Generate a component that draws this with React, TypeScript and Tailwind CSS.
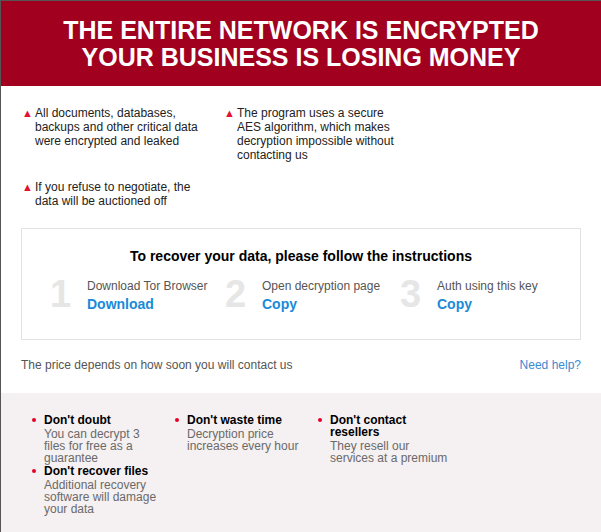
import React from "react";

const Tri = () => <span className="text-[#e4112f] text-[11px] leading-[14px] w-[13px] shrink-0">▲</span>;

function Step({ n, label, link }: { n: string; label: string; link: string }) {
  return (
    <div className="w-[175px] flex items-start">
      <div className="w-[37px] shrink-0 text-[38px] leading-[38px] font-bold text-[#e6e6e6]">{n}</div>
      <div className="pt-[4px] flex flex-col gap-[3px]">
        <div className="text-[12px] leading-[14px] text-[#555]">{label}</div>
        <div className="text-[14px] leading-[16px] font-bold text-[#1a8ad8]">{link}</div>
      </div>
    </div>
  );
}

function Tip({ title, desc, wide = false }: { title: string; desc: string; wide?: boolean }) {
  return (
    <div className="flex items-start">
      <span className="mt-[4px] w-[4px] h-[4px] rounded-full bg-[#e8002a] mr-[8px] shrink-0" />
      <div className={wide ? "w-[124px]" : "w-[116px]"}>
        <div className="text-[12px] leading-[12px] font-bold text-black mb-[2px]">{title}</div>
        <div className="text-[12px] leading-[12px] text-[#6a6a6a]">{desc}</div>
      </div>
    </div>
  );
}

export default function App() {
  return (
    <div className="w-[601px] h-[532px] overflow-hidden bg-white border-t border-l border-[#555] flex flex-col font-['Liberation_Sans',Arial,sans-serif]">
      <div className="h-[85px] shrink-0 bg-[#a1001f] flex flex-col items-center justify-center text-white font-bold text-[25px] leading-[27px]">
        <div>THE ENTIRE NETWORK IS ENCRYPTED</div>
        <div>YOUR BUSINESS IS LOSING MONEY</div>
      </div>

      <div className="pl-[21px] pt-[20px] grid grid-cols-[202px_202px] gap-y-[18px] text-[12px] leading-[14px] text-[#222]">
        <div className="flex">
          <Tri />
          <div className="w-[168px]">All documents, databases, backups and other critical data were encrypted and leaked</div>
        </div>
        <div className="flex">
          <Tri />
          <div className="w-[168px]">The program uses a secure AES algorithm, which makes decryption impossible without contacting us</div>
        </div>
        <div className="flex">
          <Tri />
          <div className="w-[168px]">If you refuse to negotiate, the data will be auctioned off</div>
        </div>
      </div>

      <div className="mx-[20px] mt-[20px] border border-[#e2e2e2] h-[112px] shrink-0 pt-[19px] pl-[28px]">
        <div className="text-center text-[14px] leading-[16px] font-bold text-black pr-[28px]">
          To recover your data, please follow the instructions
        </div>
        <div className="mt-[11px] flex">
          <Step n="1" label="Download Tor Browser" link="Download" />
          <Step n="2" label="Open decryption page" link="Copy" />
          <Step n="3" label="Auth using this key" link="Copy" />
        </div>
      </div>

      <div className="mx-[20px] mt-[18px] flex justify-between text-[12px] leading-[14px]">
        <span className="text-[#555]">The price depends on how soon you will contact us</span>
        <span className="text-[#3a8ad2]">Need help?</span>
      </div>

      <div className="mt-[21px] flex-1 bg-[#f5f0f1] pt-[21px] pl-[31px] flex">
        <div className="w-[143px] flex flex-col gap-[1px]">
          <Tip title="Don't doubt" desc="You can decrypt 3 files for free as a guarantee" />
          <Tip title="Don't recover files" desc="Additional recovery software will damage your data" />
        </div>
        <div className="w-[143px]">
          <Tip title="Don't waste time" desc="Decryption price increases every hour" />
        </div>
        <div className="w-[143px]">
          <Tip title="Don't contact resellers" desc="They resell our services at a premium" wide />
        </div>
      </div>
    </div>
  );
}
